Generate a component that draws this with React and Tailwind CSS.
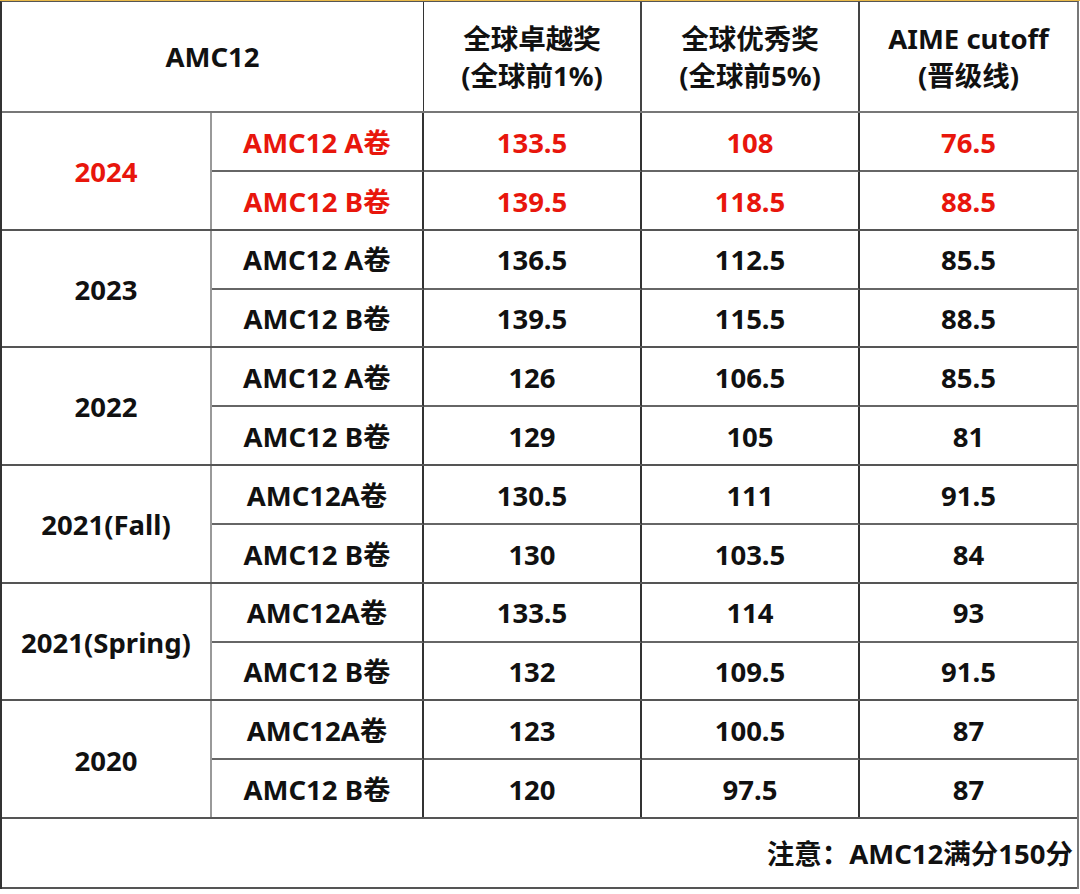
import * as React from "react";

const groups = [
  {
    year: "2024",
    red: true,
    rows: [
      ["AMC12 A卷", "133.5", "108", "76.5"],
      ["AMC12 B卷", "139.5", "118.5", "88.5"],
    ],
  },
  {
    year: "2023",
    rows: [
      ["AMC12 A卷", "136.5", "112.5", "85.5"],
      ["AMC12 B卷", "139.5", "115.5", "88.5"],
    ],
  },
  {
    year: "2022",
    rows: [
      ["AMC12 A卷", "126", "106.5", "85.5"],
      ["AMC12 B卷", "129", "105", "81"],
    ],
  },
  {
    year: "2021(Fall)",
    rows: [
      ["AMC12A卷", "130.5", "111", "91.5"],
      ["AMC12 B卷", "130", "103.5", "84"],
    ],
  },
  {
    year: "2021(Spring)",
    rows: [
      ["AMC12A卷", "133.5", "114", "93"],
      ["AMC12 B卷", "132", "109.5", "91.5"],
    ],
  },
  {
    year: "2020",
    rows: [
      ["AMC12A卷", "123", "100.5", "87"],
      ["AMC12 B卷", "120", "97.5", "87"],
    ],
  },
];

const font = { fontFamily: '"Noto Sans", "Noto Sans CJK SC", sans-serif' };

const App = () => {
  return (
    <div
      className="w-[1080px] h-[894px] bg-white overflow-hidden text-[#111] font-bold text-[27.5px] leading-[1.33]"
      style={font}
    >
      <div className="h-[1px] bg-[#e9b949]" />
      <div className="w-[1079px] border-l-2 border-r-2 border-l-[#333] border-r-[#777] border-t border-t-[#555]">
        {/* header */}
        <div className="grid grid-cols-[422px_218px_218px_217px] h-[111px] border-b-2 border-[#777]">
          <div className="flex items-center justify-center pt-[2px] border-r border-[#333]">AMC12</div>
          <div className="flex flex-col items-center justify-center pt-[3px] border-r-2 border-[#444]">
            <span>全球卓越奖</span>
            <span>(全球前1%)</span>
          </div>
          <div className="flex flex-col items-center justify-center pt-[3px] border-r-2 border-[#444]">
            <span>全球优秀奖</span>
            <span>(全球前5%)</span>
          </div>
          <div className="flex flex-col items-center justify-center pt-[3px]">
            <span>AIME cutoff</span>
            <span>(晋级线)</span>
          </div>
        </div>

        {groups.map((g) => (
          <div
            key={g.year}
            className={`grid grid-cols-[210px_212px_218px_218px_217px] border-b-2 border-[#555] ${
              g.red ? "text-[#e8160c]" : ""
            }`}
          >
            <div className="row-span-2 flex items-center justify-center pt-[3px] border-r-2 border-[#999]">
              {g.year}
            </div>
            {g.rows.map((r, i) => (
              <React.Fragment key={i}>
                {r.map((c, j) => (
                  <div
                    key={j}
                    className={`flex items-center justify-center pt-[3px] ${
                      j < 3 ? "border-r-2 border-r-[#333]" : ""
                    } ${i === 0 ? "h-[59px] border-b-2 border-b-[#666]" : "h-[56.7px]"}`}
                  >
                    {c}
                  </div>
                ))}
              </React.Fragment>
            ))}
          </div>
        ))}

        {/* note */}
        <div className="h-[70px] flex items-center justify-end pt-[3px] pr-[4px] border-b-2 border-[#555]">
          注意：AMC12满分150分
        </div>
      </div>
    </div>
  );
};

export default App;
